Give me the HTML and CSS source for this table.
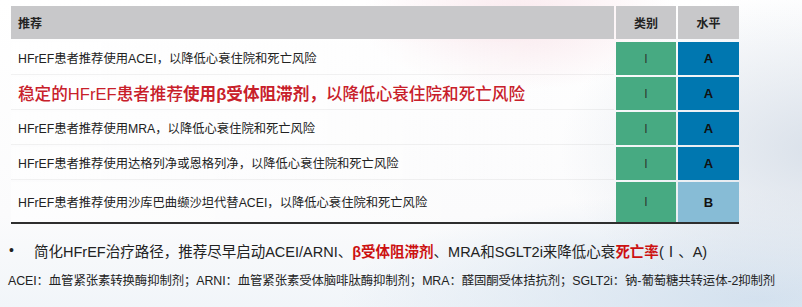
FILE: index.html
```html
<!DOCTYPE html>
<html lang="zh">
<head>
<meta charset="utf-8">
<title>HFrEF 推荐</title>
<link rel="stylesheet" href="styles.css">
</head>
<body>
<div class="page">
  <div class="rec-table">
    <div class="hd hd-text">推荐</div>
    <div class="hd hd-mid">类别</div>
    <div class="hd hd-mid">水平</div>

    <div class="txt">HFrEF患者推荐使用ACEI，以降低心衰住院和死亡风险</div>
    <div class="cls">I</div>
    <div class="lvl lvl-a">A</div>

    <div class="txt txt-red"><span class="med">稳定的HFrEF患者推荐</span><span class="strong">使用β受体阻滞剂，</span><span class="med">以降低心衰住院和死亡风险</span></div>
    <div class="cls">I</div>
    <div class="lvl lvl-a">A</div>

    <div class="txt">HFrEF患者推荐使用MRA，以降低心衰住院和死亡风险</div>
    <div class="cls">I</div>
    <div class="lvl lvl-a">A</div>

    <div class="txt">HFrEF患者推荐使用达格列净或恩格列净，以降低心衰住院和死亡风险</div>
    <div class="cls">I</div>
    <div class="lvl lvl-a">A</div>

    <div class="txt last">HFrEF患者推荐使用沙库巴曲缬沙坦代替ACEI，以降低心衰住院和死亡风险</div>
    <div class="cls last">I</div>
    <div class="lvl lvl-b last">B</div>
  </div>

  <div class="bullet">
    <span class="dot">•</span>
    <span class="bullet-text">简化HFrEF治疗路径，推荐尽早启动ACEI/ARNI、<span class="red">β受体阻滞剂</span>、MRA和SGLT2i来降低心衰<span class="red">死亡率</span>(Ⅰ、A)</span>
  </div>

  <div class="foot">ACEI：血管紧张素转换酶抑制剂；ARNI：血管紧张素受体脑啡肽酶抑制剂；MRA：醛固酮受体拮抗剂；SGLT2i：钠-葡萄糖共转运体-2抑制剂</div>
</div>
</body>
</html>
```

FILE: styles.css
```css
html, body {
  margin: 0;
  padding: 0;
}

body {
  width: 802px;
  height: 307px;
  overflow: hidden;
  font-family: "Liberation Sans", "Noto Sans CJK SC", sans-serif;
  color: #222;
  background:
    radial-gradient(ellipse 160px 70px at 520px 20px, rgba(246, 214, 222, 0.55), rgba(246, 214, 222, 0) 100%),
    radial-gradient(ellipse 260px 160px at 820px 150px, rgba(214, 222, 232, 0.9), rgba(214, 222, 232, 0) 100%),
    radial-gradient(ellipse 420px 110px at 760px 300px, rgba(210, 224, 238, 0.95), rgba(210, 224, 238, 0) 100%),
    linear-gradient(180deg, #ffffff 0%, #fbfbfc 70%, #f1f5f9 100%);
}

.page {
  padding-top: 6px;
}

.rec-table {
  margin-left: 11px;
  width: 728px;
  display: grid;
  grid-template-columns: 603px 60px 61px;
  grid-template-rows: 34px 33px 33px 33px 33px 40px;
  column-gap: 2px;
  row-gap: 2px;
  border-bottom: 2px solid #2e2e2e;
}

.hd {
  background: #c8c8ca;
  display: flex;
  align-items: center;
  font-size: 12px;
  font-weight: 700;
  color: #222;
  font-family: "Noto Sans CJK SC", sans-serif;
  margin-bottom: 1px;
}

.hd-text {
  padding-left: 7px;
}

.hd-mid {
  justify-content: center;
}

.txt {
  display: flex;
  align-items: center;
  padding-left: 7px;
  font-size: 12.3px;
  color: #222;
  border-bottom: 1px solid rgba(0, 0, 0, 0.05);
  white-space: nowrap;
  background: linear-gradient(90deg, rgba(255,255,255,0.6), rgba(255,255,255,0) 90%);
}

.txt.last {
  border-bottom: none;
}

.txt-red {
  font-size: 16.6px;
  color: #c8202a;
}

.txt-red .med {
  font-weight: 500;
}

.txt-red .strong {
  font-weight: 700;
}

.cls, .lvl {
  display: flex;
  align-items: center;
  justify-content: center;
  font-size: 12px;
}

.cls {
  background: #47aa82;
  color: #2f3a33;
  font-weight: 400;
}

.lvl {
  font-weight: 700;
  color: #111;
  font-size: 13px;
}

.lvl-a {
  background: #0077b0;
}

.lvl-b {
  background: #87bcd6;
}

.bullet {
  margin-top: 16px;
  display: flex;
  align-items: center;
  height: 20px;
  font-size: 14.5px;
  color: #222;
  white-space: nowrap;
}

.dot {
  width: 24px;
  padding-left: 9px;
  font-size: 14px;
}

.bullet-text {
  padding-left: 1px;
}

.red {
  color: #cc1111;
  font-weight: 700;
}

.foot {
  margin-top: 12px;
  padding-left: 8px;
  height: 18px;
  line-height: 18px;
  font-size: 12.4px;
  letter-spacing: -0.1px;
  color: #222;
  white-space: nowrap;
}
```
